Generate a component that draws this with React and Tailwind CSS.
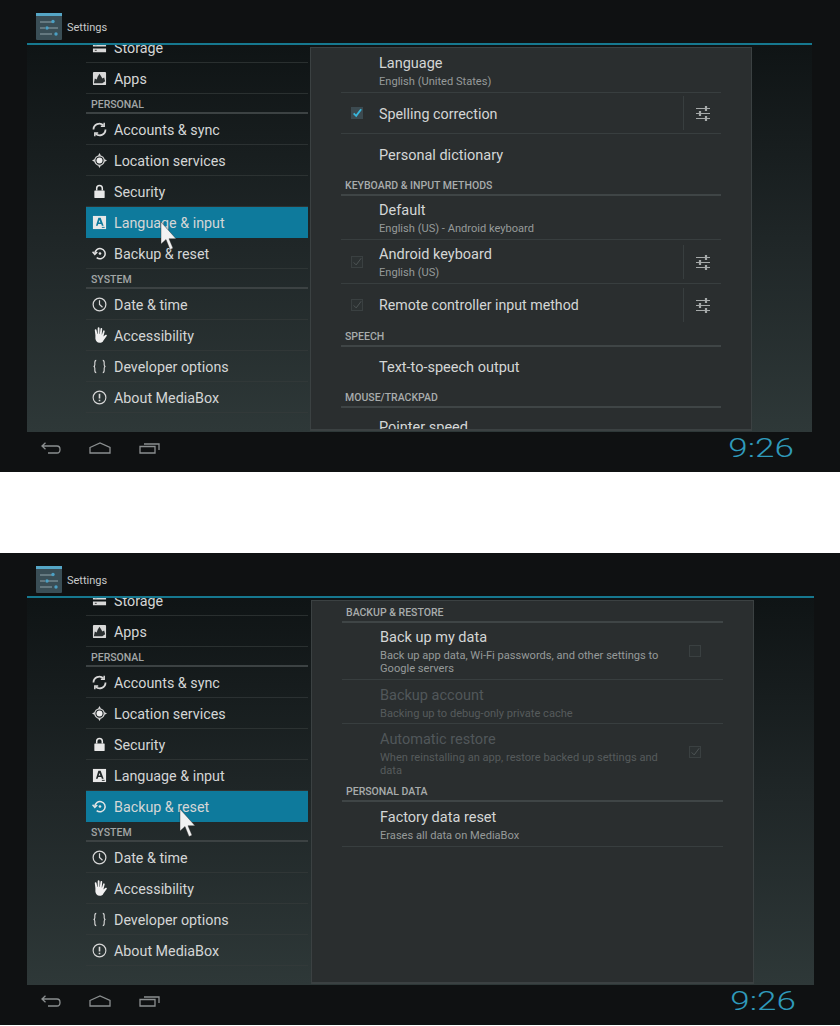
const fontStack = { fontFamily: 'Roboto, sans-serif' };

const Storage = () => (
  <svg viewBox="0 0 16 16" className="w-[15px] h-[15px]">
    <path d="M1 3h14v4H1zM1 9h14v4H1z" fill="#d8d8d8" />
    <path d="M3 5h2M3 11h2" stroke="#333" />
  </svg>
);
const Apps = () => (
  <svg viewBox="0 0 16 16" className="w-[15px] h-[15px]">
    <rect x="1" y="1" width="14" height="14" rx="1" fill="#d8d8d8" />
    <path d="M2 13l1-5 2 1 1-3 2-3 2 3 1 2 2-1 1 4-3 2H4z" fill="#2a2f30" />
  </svg>
);
const Sync = () => (
  <svg viewBox="0 0 16 16" className="w-[15px] h-[15px]" fill="none" stroke="#d8d8d8" strokeWidth="1.9">
    <path d="M1.6 8a6.2 6.2 0 0 1 10.6-4.4M14.4 8a6.2 6.2 0 0 1-10.6 4.4" />
    <path d="M13 .8v3.6H9.4M3 15.2v-3.6h3.6" strokeWidth="1.6" />
  </svg>
);
const Location = () => (
  <svg viewBox="0 0 16 16" className="w-[15px] h-[15px]">
    <circle cx="8" cy="8" r="5" fill="none" stroke="#d8d8d8" strokeWidth="1.2" />
    <circle cx="8" cy="8" r="3.2" fill="#eeeeee" />
    <path d="M8 0l1.6 3H6.4zM8 16l1.6-3H6.4zM0 8l3-1.6v3.2zM16 8l-3-1.6v3.2z" fill="#d8d8d8" />
  </svg>
);
const Lock = () => (
  <svg viewBox="0 0 16 16" className="w-[15px] h-[15px]">
    <path d="M5 7V4.6a3 3 0 0 1 6 0V7" fill="none" stroke="#e8e8e8" strokeWidth="1.6" />
    <rect x="2.5" y="7" width="11" height="8" rx="0.5" fill="#e8e8e8" />
  </svg>
);
const Lang = ({ bg }) => (
  <svg viewBox="0 0 16 16" className="w-[15px] h-[15px]">
    <rect x="1" y="1" width="14" height="14" fill="#e8e8e8" />
    <path d="M6.8 3h2.4l3.2 8.4h-1.9l-.6-1.8H6.6L6 11.4H4.2zM7.1 8.1h1.9L8 5.2z" fill={bg} fillRule="evenodd" />
    <path d="M10.5 13.2h3" stroke={bg} />
  </svg>
);
const Backup = () => (
  <svg viewBox="0 0 16 16" className="w-[15px] h-[15px]" fill="none" stroke="#e4e4e4" strokeWidth="1.6">
    <path d="M3 8a5.5 5.5 0 1 1 2 4.4" />
    <path d="M.6 6.2L3 9l2.6-2.6" />
    <circle cx="8.5" cy="8" r="1.4" fill="#e4e4e4" stroke="none" />
  </svg>
);
const Clock = () => (
  <svg viewBox="0 0 16 16" className="w-[15px] h-[15px]" fill="none" stroke="#d8d8d8" strokeWidth="1.3">
    <circle cx="8" cy="8" r="6.8" />
    <path d="M8 3.4V8l3.2 3" />
  </svg>
);
const Hand = () => (
  <svg viewBox="0 0 16 16" className="w-[16px] h-[16px]">
    <path d="M3.4 8L2.8 3.2a.85.85 0 0 1 1.7-.2L5.4 7h.3V1.2a.9.9 0 0 1 1.8 0V7h.3l.7-5.2a.85.85 0 0 1 1.7.2L9.7 7.4h.3l1.2-3.6a.8.8 0 0 1 1.5.5L11.4 9.6l1.8-1.6c.9-.8 2.2.2 1.5 1.1l-3.4 4.6C10.8 15 9.5 15.8 7.7 15.8 5 15.8 3.8 14 3.4 11.8z" fill="#f0f0f0" />
  </svg>
);
const Braces = () => (
  <svg viewBox="0 0 16 16" className="w-[15px] h-[15px]" fill="none" stroke="#d8d8d8" strokeWidth="1.2">
    <path d="M4.5 1.5C3 1.5 3 2.5 3 4v2.2C3 7.4 2.4 8 1.6 8 2.4 8 3 8.6 3 9.8V12c0 1.5 0 2.5 1.5 2.5" />
    <path d="M11.5 1.5C13 1.5 13 2.5 13 4v2.2c0 1.2.6 1.8 1.4 1.8-.8 0-1.4.6-1.4 1.8V12c0 1.5 0 2.5-1.5 2.5" />
  </svg>
);
const Info = () => (
  <svg viewBox="0 0 16 16" className="w-[15px] h-[15px]" fill="none" stroke="#d8d8d8" strokeWidth="1.2">
    <circle cx="8" cy="8" r="6.8" />
    <path d="M8 4v5M8 10.4V12" strokeWidth="1.7" />
  </svg>
);

const Tune = () => (
  <svg viewBox="0 0 16 16" className="w-[16px] h-[16px]" stroke="#a5a9a9" fill="none">
    <path d="M1 3.5h14M1 8.5h14M1 13.5h14" strokeWidth="1" />
    <path d="M11 1v5M5 6v5M11 11v5" strokeWidth="2.2" />
  </svg>
);

const Cursor = () => (
  <svg viewBox="0 0 16 30" className="w-[16px] h-[30px]">
    <path d="M1 1v22l5-4.5 4 10 3-1.2-4-9.6H16z" fill="#f2f2f2" stroke="#2a2a2a" strokeWidth="0.4" />
  </svg>
);

const SettingsLogo = () => (
  <svg viewBox="0 0 26 27" className="w-[26px] h-[27px]">
    <rect width="26" height="27" rx="1" fill="#3a4e56" />
    <rect width="26" height="3" fill="#55a6c6" />
    <path d="M4 9h12M4 15h5M12 15h10M4 21h12" stroke="#8fa3aa" strokeWidth="1" />
    <circle cx="17" cy="8.5" r="1.7" fill="#4ba0c4" />
    <circle cx="11" cy="15" r="1.7" fill="#4ba0c4" />
    <circle cx="20" cy="21" r="1.7" fill="#4ba0c4" />
  </svg>
);

function SideRow({ icon: Icon, label, active }) {
  return (
    <div className={`h-[31px] flex items-center pl-[6px] pt-[2px] border-b ${active ? 'bg-[#0e7a9c] border-transparent' : 'border-[#343a3b]/70'}`}>
      <div className="w-[22px] flex -mt-[2px]"><Icon /></div>
      <span className="text-[14.3px] text-[#d4d6d6] leading-none">{label}</span>
    </div>
  );
}

function SideHeader({ label }) {
  return (
    <div className="h-[20px] flex items-end pl-[5px] border-b-2 border-[#3c4243] pb-[2px]">
      <span className="text-[10.5px] leading-none font-medium text-[#a2a6a6]">{label}</span>
    </div>
  );
}

function Sidebar({ active }) {
  const row = (Icon, label) => <SideRow icon={Icon} label={label} active={active === label} />;
  const langBg = active === 'Language & input' ? '#0e7a9c' : '#23292a';
  return (
    <div className="w-[222px] ml-[59px] shrink-0 overflow-hidden">
      <div className="-mt-[13px]">
        {row(Storage, 'Storage')}
        {row(Apps, 'Apps')}
        <SideHeader label="PERSONAL" />
        {row(Sync, 'Accounts & sync')}
        {row(Location, 'Location services')}
        {row(Lock, 'Security')}
        {row(() => <Lang bg={langBg} />, 'Language & input')}
        {row(Backup, 'Backup & reset')}
        <SideHeader label="SYSTEM" />
        {row(Clock, 'Date & time')}
        {row(Hand, 'Accessibility')}
        {row(Braces, 'Developer options')}
        {row(Info, 'About MediaBox')}
      </div>
    </div>
  );
}

function SectionHeader({ label }) {
  return (
    <div className="h-[22px] flex items-end px-[4px] pb-[3px] border-b-2 border-[#3f4546]">
      <span className="text-[10.5px] leading-none font-medium text-[#a8acac]">{label}</span>
    </div>
  );
}

function Check({ checked, dim, blue }) {
  return (
    <div className={`w-[12px] h-[12px] border flex items-center justify-center ${blue ? 'border-transparent bg-[#3c4a50]' : 'border-[#3a4041] bg-[#2c3132]'}`}>
      {checked && (
        <svg viewBox="0 0 12 12" className="w-[12px] h-[12px]" fill="none" stroke={blue ? '#38b6dc' : dim ? '#4e5455' : '#999'} strokeWidth={blue ? 2.2 : 1.2}>
          <path d="M2 6.5L5 9.5 11 1.5" />
        </svg>
      )}
    </div>
  );
}

function TuneButton() {
  return (
    <div className="flex items-center">
      <div className="w-[38px] h-[34px] pl-[1px] border-l border-[#383e3f] flex items-center justify-center"><Tune /></div>
    </div>
  );
}

function PrefRow({ title, sub, h, check, blue, tune, dim, trailing, pt = 'pt-[2px]', noBorder, titleSize = 'text-[14.5px]' }) {
  return (
    <div className={`flex items-stretch ${noBorder ? '' : 'border-b border-[#383e3f]'}`} style={{ height: h }}>
      <div className="w-[38px] shrink-0 flex items-center pl-[10px]">
        {check && <Check checked dim={check === 'dim'} blue={blue} />}
      </div>
      <div className={`flex-1 min-w-0 flex flex-col justify-center ${pt}`}>
        <div className={`${titleSize} leading-[18px] ${dim ? 'text-[#51575a]' : 'text-[#d4d6d6]'}`}>{title}</div>
        {sub && <div className={`text-[11.1px] leading-[13px] mt-[2px] ${dim ? 'text-[#565b5c]' : 'text-[#969a9a]'}`}>{sub}</div>}
      </div>
      {tune && <TuneButton />}
      {trailing && <div className="w-[56px] shrink-0 flex items-center justify-center">{trailing}</div>}
    </div>
  );
}

function Shell({ children, side, width, panelClass, clock, cursorClass }) {
  return (
    <div style={fontStack} className="h-[472px] bg-[#0f1112] pl-[27px] flex flex-col relative overflow-hidden">
      <div className="h-[45px] shrink-0 flex items-center pl-[9px] pt-[10px] border-b-2 border-[#16788f]" style={{ width }}>
        <SettingsLogo />
        <span className="text-[11px] text-[#c8caca] ml-[5px] mt-[3px]">Settings</span>
      </div>
      <div className="h-[387px] shrink-0 flex bg-gradient-to-b from-[#0f1415] via-[#1f2627] to-[#2e3838]" style={{ width }}>
        {side}
        <div className={`shrink-0 mt-[2px] mb-[1px] bg-[#2a2e2f] border border-[#3b4142] border-b-2 overflow-hidden px-[30px] ${panelClass}`}>
          {children}
        </div>
      </div>
      <div className="flex-1 flex items-center justify-between pb-[8px]" style={{ width }}>
        <div className="flex items-center pl-[14px] gap-[28px]">
          <svg viewBox="0 0 20 12" className="w-[20px] h-[12px]" fill="none" stroke="#8b8f90" strokeWidth="1.3">
            <path d="M1 4h15c4 0 4 7 0 7H7M4.5 .8L1 4l3.500 3.200" />
          </svg>
          <svg viewBox="0 0 22 12" className="w-[22px] h-[12px]" fill="none" stroke="#8b8f90" strokeWidth="1.3">
            <path d="M1 5.5L11 1l10 4.500V11H1z" />
          </svg>
          <svg viewBox="0 0 21 12" className="w-[21px] h-[12px]" fill="none" stroke="#8b8f90" strokeWidth="1.3">
            <path d="M1 4.5h15V11H1zM5 2h15v6" />
          </svg>
        </div>
        <span className="text-[25px] leading-none font-light text-[#2f9abb] mr-[18px] scale-x-[1.4] origin-right">{clock}</span>
      </div>
      <div className={`absolute ${cursorClass}`}><Cursor /></div>
    </div>
  );
}

function PlainRow({ h, pt = 'pt-[2px]', children }) {
  return (
    <div className={`flex items-center pl-[38px] text-[14.5px] text-[#d4d6d6] ${pt}`} style={{ height: h }}>
      {children}
    </div>
  );
}

export default function App() {
  const clock = '9:26';
  return (
    <div className="bg-white h-[1026px] w-[840px] overflow-hidden">
      <Shell width={785} side={<Sidebar active="Language & input" />} panelClass="w-[442px] ml-[2px]" clock={clock} cursorClass="left-[160px] top-[221px]">
        <PrefRow h={45} pt="pt-[2px]" title="Language" sub="English (United States)" />
        <PrefRow h={41} pt="pt-[1px]" check="on" blue title="Spelling correction" titleSize="text-[14.3px]" tune />
        <PlainRow h={40} pt="pt-[4px]">Personal dictionary</PlainRow>
        <SectionHeader label="KEYBOARD & INPUT METHODS" />
        <PrefRow h={44} title="Default" sub="English (US) - Android keyboard" />
        <PrefRow h={44} check="dim" title="Android keyboard" sub="English (US)" tune />
        <PrefRow h={41} pt="pt-0" check="dim" noBorder title="Remote controller input method" titleSize="text-[14.2px]" tune />
        <SectionHeader label="SPEECH" />
        <PlainRow h={39}>Text-to-speech output</PlainRow>
        <SectionHeader label="MOUSE/TRACKPAD" />
        <PlainRow h={40} pt="pt-0">Pointer speed</PlainRow>
      </Shell>
      <div className="h-[81px]" />
      <Shell width={787} side={<Sidebar active="Backup & reset" />} panelClass="w-[443px] ml-[3px]" clock={clock} cursorClass="left-[179px] top-[255px]">
        <SectionHeader label="BACKUP & RESTORE" />
        <PrefRow h={57} pt="pt-[1px]" title="Back up my data" sub="Back up app data, Wi-Fi passwords, and other settings to Google servers" trailing={<Check />} />
        <PrefRow h={44} pt="pt-[4px]" dim title="Backup account" sub="Backing up to debug-only private cache" />
        <PrefRow h={56} noBorder dim pt="pt-[4px]" title="Automatic restore" sub="When reinstalling an app, restore backed up settings and data" trailing={<Check checked dim />} />
        <SectionHeader label="PERSONAL DATA" />
        <PrefRow h={45} title="Factory data reset" sub="Erases all data on MediaBox" />
      </Shell>
    </div>
  );
}
